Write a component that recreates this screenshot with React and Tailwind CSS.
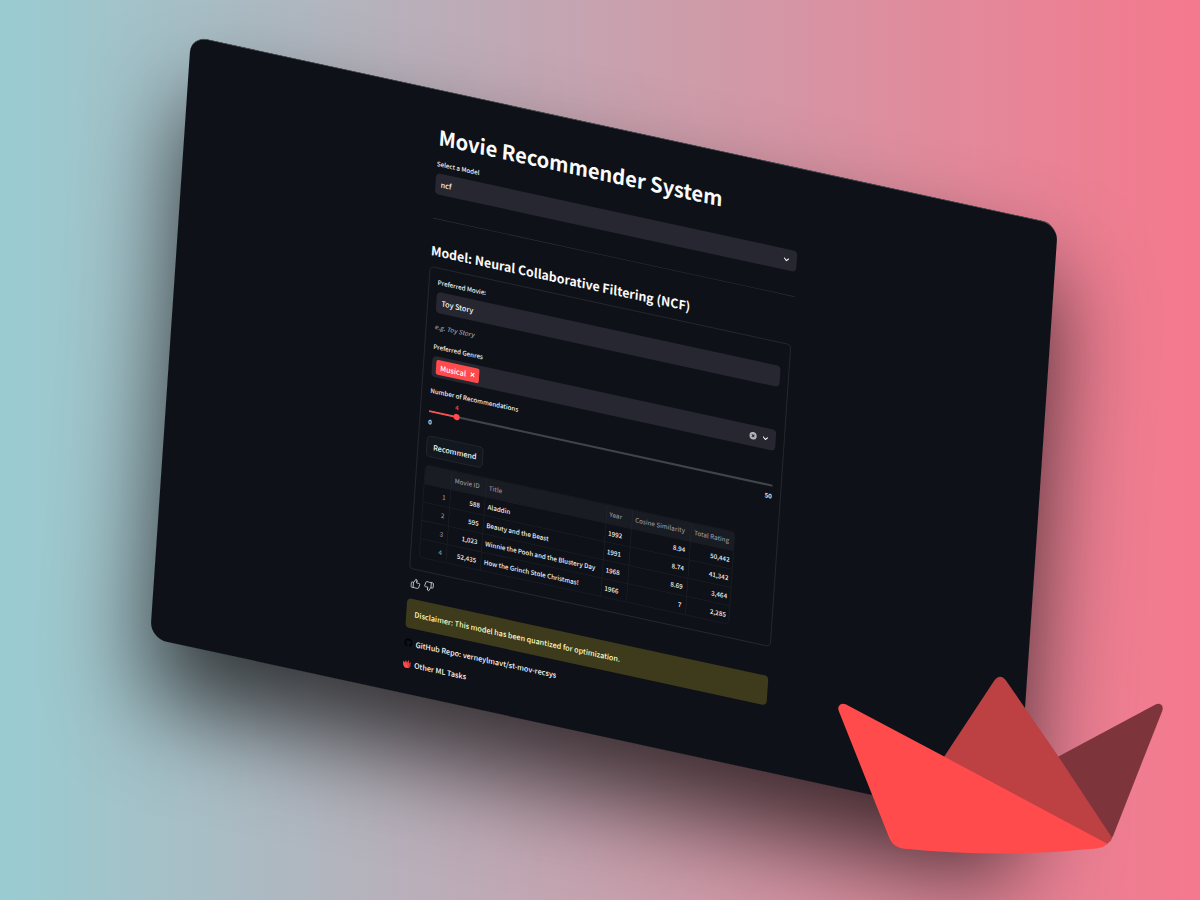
import React from "react";
import { ChevronDown, ThumbsUp, ThumbsDown } from "lucide-react";
import { FaGithub } from "react-icons/fa";

const columns = ["Movie ID", "Title", "Year", "Cosine Similarity", "Total Rating"];

const movies = [
  { id: "588", title: "Aladdin", year: "1992", similarity: "8.94", rating: "50,442" },
  { id: "595", title: "Beauty and the Beast", year: "1991", similarity: "8.74", rating: "41,342" },
  { id: "1,023", title: "Winnie the Pooh and the Blustery Day", year: "1968", similarity: "8.69", rating: "3,464" },
  { id: "52,435", title: "How the Grinch Stole Christmas!", year: "1966", similarity: "7", rating: "2,285" },
];

function Boat({ className }) {
  return (
    <svg viewBox="50 48 982 536" className={className} aria-hidden="true">
      <path
        d="M715 290 L1008 133 Q1018 129 1025 136 Q1030 143 1027 152 L880 526 L870 545 L700 320 Z"
        fill="#7d353b"
      />
      <path
        d="M365 300 L372 290 L522 62 Q540 39 558 62 L715 290 L876 534 Q872 546 860 554 L600 440 Z"
        fill="#bd4043"
      />
      <path
        d="M55 152 Q51 141 59 134 Q67 129 76 133 L372 290 L862 552 Q850 564 830 566 Q540 596 252 567 Q220 563 208 537 Z"
        fill="#ff4b4b"
      />
    </svg>
  );
}

function Crown({ className }) {
  return (
    <svg viewBox="0 0 16 18" className={className} aria-hidden="true">
      <path d="M11 9 L15 4 L15 13 L12 17 Z" fill="#b93a42" />
      <path d="M4 8 L5 2 L8 7 L11 1 L12 9 L12 17 L8 17 Z" fill="#e0444a" />
      <path d="M0 5 L5 8 L9 12 L12 17 L4 17 L1 13 Z" fill="#ff4b4b" />
    </svg>
  );
}

function FieldLabel({ className = "", ...props }) {
  return <label className={`block text-[12px] leading-5 text-[#f0f0f2] ${className}`} {...props} />;
}

function RecommendForm() {
  return (
    <form
      className="mt-[11px] rounded-lg border border-[#383a42] px-4 pb-6 pt-4"
      onSubmit={(e) => e.preventDefault()}
    >
      <FieldLabel htmlFor="movie">Preferred Movie:</FieldLabel>
      <input
        id="movie"
        type="text"
        defaultValue="Toy Story"
        className="mt-2 block h-10 w-full rounded-lg bg-[#262730] px-2.5 text-[14px] text-[#fafafa] outline-none"
      />
      <p className="mt-4 text-[12px] italic leading-5 text-[#9b9ca1]">e.g. Toy Story</p>

      <FieldLabel htmlFor="genres" className="mt-[18px]">
        Preferred Genres
      </FieldLabel>
      <div className="mt-2 flex h-10 items-center rounded-lg bg-[#262730] pl-2 pr-3">
        <span className="flex h-7 items-center gap-2 rounded bg-[#ff4b4b] px-2 text-[14px] leading-5 text-white">
          Musical
          <button type="button" aria-label="Remove Musical" className="flex">
            <svg viewBox="0 0 10 10" className="size-2.5" stroke="currentColor" strokeWidth="2" aria-hidden="true">
              <path d="M1.5 1.5 L8.5 8.5 M8.5 1.5 L1.5 8.5" />
            </svg>
          </button>
        </span>
        <input id="genres" type="text" className="min-w-0 flex-1 bg-transparent px-2 text-[14px] text-white outline-none" />
        <button type="button" aria-label="Clear all" className="mr-2 flex">
          <svg viewBox="0 0 16 16" className="size-4" aria-hidden="true">
            <circle cx="8" cy="8" r="7" fill="#b4b5ba" />
            <path d="M5.5 5.5 L10.5 10.5 M10.5 5.5 L5.5 10.5" stroke="#262730" strokeWidth="1.8" />
          </svg>
        </button>
        <button type="button" aria-label="Show genres" className="flex text-[#fafafa]">
          <ChevronDown className="size-4" strokeWidth={3} />
        </button>
      </div>

      <FieldLabel htmlFor="count" className="mt-4">
        Number of Recommendations
      </FieldLabel>
      <div className="relative mt-6 flex h-3 items-center">
        <div className="flex h-1 w-full overflow-hidden rounded-full bg-[#42444c]">
          <div className="w-[8%] bg-[#ff4b4b]" />
        </div>
        <output htmlFor="count" className="absolute bottom-4 left-[8%] -translate-x-1/2 text-[12px] leading-4 text-[#ff4b4b]">
          4
        </output>
        <input
          id="count"
          type="range"
          min="0"
          max="50"
          defaultValue="4"
          className="absolute -inset-x-1.5 top-0 h-3 appearance-none bg-transparent [&::-webkit-slider-thumb]:size-3 [&::-webkit-slider-thumb]:appearance-none [&::-webkit-slider-thumb]:rounded-full [&::-webkit-slider-thumb]:bg-[#ff4b4b]"
        />
      </div>
      <div className="mt-1 flex justify-between text-[12px] font-bold leading-5 text-[#e4e4e7]">
        <span>0</span>
        <span>50</span>
      </div>

      <button
        type="submit"
        className="mt-4 block h-10 rounded-lg border border-[#31333b] bg-[#131720] px-3 text-[14px] font-medium text-[#fafafa]"
      >
        Recommend
      </button>

      <div className="mt-4 w-[604px] overflow-hidden rounded-lg border border-[#22242c]">
        <table className="w-full table-fixed border-collapse text-[12px] leading-4 text-[#f1f1f3]">
          <colgroup>
            <col className="w-[51px]" />
            <col className="w-[67px]" />
            <col className="w-[235px]" />
            <col className="w-[50px]" />
            <col className="w-[115px]" />
            <col className="w-[86px]" />
          </colgroup>
          <thead>
            <tr className="h-[35px] bg-[#1a1c24] text-[#8f9096]">
              <td />
              {columns.map((name) => (
                <th key={name} scope="col" className="whitespace-nowrap border-l border-[#282a33] px-1.5 text-left font-medium">
                  {name}
                </th>
              ))}
            </tr>
          </thead>
          <tbody>
            {movies.map((movie, i) => (
              <tr key={movie.id} className="h-[35px] border-t border-[#22242c]">
                <th scope="row" className="px-2 text-right font-medium text-[#8f9096]">
                  {i + 1}
                </th>
                <td className="border-l border-[#22242c] px-2 text-right">{movie.id}</td>
                <td className="whitespace-nowrap border-l border-[#22242c] px-1.5">{movie.title}</td>
                <td className="border-l border-[#22242c] px-1.5">{movie.year}</td>
                <td className="border-l border-[#22242c] px-2 text-right">{movie.similarity}</td>
                <td className="border-l border-[#22242c] px-2 text-right">{movie.rating}</td>
              </tr>
            ))}
          </tbody>
        </table>
      </div>
    </form>
  );
}

export default function App() {
  return (
    <main className="relative flex h-screen items-center justify-center overflow-hidden bg-linear-to-r/srgb from-[#99ccd1] to-[#f5788d] font-['Noto_Sans_CJK_SC','Noto_Sans',sans-serif] font-medium">
      <section className="min-h-[1150px] w-[1690px] shrink-0 rounded-[32px] border-t-2 border-[#4a4c52] bg-[#0e1117] pr-2 pt-[60px] shadow-[0_110px_180px_0_rgba(0,0,0,0.7)] [transform:matrix(0.513,0.1115,-0.0357,0.524,4,-19)]">
        <div className="mx-auto w-full max-w-[704px]">
          <h1 className="text-[39px] font-bold leading-[52px] text-[#fafafa]">Movie Recommender System</h1>

          <FieldLabel htmlFor="model" className="mt-4">
            Select a Model
          </FieldLabel>
          <div className="relative mt-2">
            <select
              id="model"
              defaultValue="ncf"
              className="block h-10 w-full appearance-none rounded-lg bg-[#262730] px-2.5 text-[14px] text-[#fafafa] outline-none"
            >
              <option>ncf</option>
            </select>
            <ChevronDown className="pointer-events-none absolute right-3 top-3 size-4 text-[#fafafa]" strokeWidth={3} />
          </div>

          <hr className="mt-[46px] border-[#2f3139]" />

          <h2 className="mt-10 text-[24px] font-bold leading-10 text-[#fafafa]">
            Model: Neural Collaborative Filtering (NCF)
          </h2>

          <RecommendForm />

          <div className="mt-4 flex gap-1.5 pl-1 text-[#c8c9cc]">
            <button type="button" aria-label="Good recommendations" className="flex">
              <ThumbsUp className="size-5" />
            </button>
            <button type="button" aria-label="Bad recommendations" className="flex">
              <ThumbsDown className="size-5" />
            </button>
          </div>

          <p className="mt-5 rounded-lg bg-[#3e3b1d] px-4 py-4 text-[14px] leading-6 text-[#ffffc2]">
            Disclaimer: This model has been quantized for optimization.
          </p>

          <p className="mt-4 flex items-center gap-1.5 text-[14px] leading-6 text-[#fafafa]">
            <FaGithub className="size-4 text-black" aria-hidden="true" />
            <a href="https://github.com/verneylmavt/st-mov-recsys">GitHub Repo: verneylmavt/st-mov-recsys</a>
          </p>
          <p className="mt-4 flex items-center gap-1.5 text-[14px] leading-6 text-[#fafafa]">
            <Crown className="w-4" />
            <a href="#other-tasks">Other ML Tasks</a>
          </p>
        </div>
      </section>

      <Boat className="absolute bottom-[46px] right-9 w-[327px]" />
    </main>
  );
}
